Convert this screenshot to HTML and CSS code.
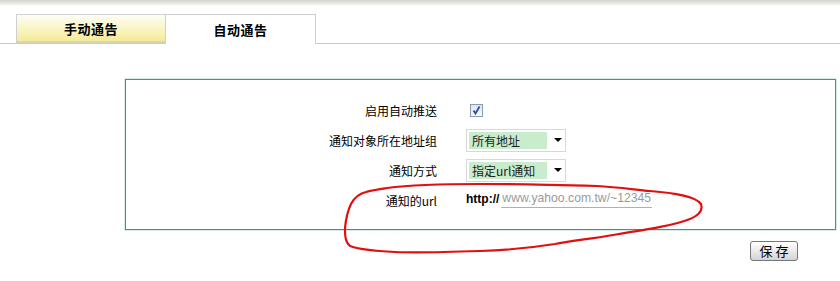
FILE: index.html
```html
<!DOCTYPE html>
<html lang="zh">
<head>
<meta charset="utf-8">
<title>自动通告</title>
<link rel="stylesheet" href="styles.css">
</head>
<body>
<div class="topbar"></div>
<div class="tabs">
  <div class="tab tab-manual">手动通告</div>
  <div class="tab tab-auto">自动通告</div>
</div>
<div class="panel">
  <div class="form">
    <div class="label">启用自动推送</div>
    <div class="value">
      <span class="checkbox">
        <svg width="13" height="13" viewBox="0 0 13 13"><path d="M3.5 6.5 L5.5 9.5 L9.5 2.5" fill="none" stroke="#2a4fa8" stroke-width="1.8"/></svg>
      </span>
    </div>
    <div class="label">通知对象所在地址组</div>
    <div class="value">
      <div class="select"><span class="sel-text">所有地址</span><span class="arrow"></span></div>
    </div>
    <div class="label">通知方式</div>
    <div class="value">
      <div class="select"><span class="sel-text">指定url通知</span><span class="arrow"></span></div>
    </div>
    <div class="label">通知的url</div>
    <div class="value url">
      <span class="proto">http://</span><span class="url-input">www.yahoo.com.tw/~12345<span class="caret"></span></span>
    </div>
  </div>
</div>
<div class="actions">
  <button class="save">保 存</button>
</div>
<svg class="scribble" width="840" height="281" viewBox="0 0 840 281">
  <path d="M387 188 C410 185 450 184 480 184 C520 184 560 185 597 186 C615 187 630 189 650 191 C675 193 695 196 701 204 C703 210 700 215 690 219 C675 225 650 229 613 235 C590 239 570 241 555 244 C530 248 510 250 480 251 C450 252 420 253 395 252 C375 251 360 250 350 246 C345 242 345 235 345 228 C346 218 348 210 351 204 C354 198 358 194 366 192 C372 190 380 189 387 188" fill="none" stroke="#e01010" stroke-width="2.2"/>
</svg>
</body>
</html>
```
FILE: styles.css
```css
html, body {
  margin: 0;
  padding: 0;
  background: #fff;
  font-family: "Noto Sans CJK SC", "Liberation Sans", sans-serif;
  color: #000;
}
body {
  position: relative;
  width: 840px;
  height: 281px;
  overflow: hidden;
}
.topbar {
  height: 6px;
  background: linear-gradient(#d4d4cc, #f4f4f0 80%, #fff);
}
.tabs {
  display: flex;
  margin-top: 8px;
  padding-left: 16px;
  border-bottom: 1px solid #c9c9c9;
  height: 29px;
}
.tab {
  width: 150px;
  box-sizing: border-box;
  border: 1px solid #cfcfcf;
  display: flex;
  align-items: center;
  justify-content: center;
  font-size: 13px;
  font-weight: bold;
  letter-spacing: 0.5px;
}
.tab-manual {
  background: linear-gradient(#fdfdf6, #f8f2b4 70%, #f3ea98);
  border-right: 1px solid #d6d2b0;
  border-bottom: 2px solid #d8d4b8;
}
.tab-auto {
  background: #fff;
  border-left: none;
  border-bottom: none;
  height: 30px;
}
.panel {
  margin: 35px 0 0 125px;
  width: 711px;
  height: 151px;
  box-sizing: border-box;
  border: 1px solid #2a9d97;
  box-shadow: 0 0 0 0.5px rgba(42, 157, 151, 0.4);
}
.form {
  display: grid;
  grid-template-columns: 311px auto;
  column-gap: 29px;
  grid-auto-rows: 30px;
  padding-top: 15px;
}
.label {
  text-align: right;
  font-size: 12px;
  display: flex;
  align-items: center;
  justify-content: flex-end;
}
.value {
  display: flex;
  align-items: center;
}
.checkbox {
  margin-left: 4px;
  width: 13px;
  height: 13px;
  box-sizing: border-box;
  border: 1px solid #8a9cb0;
  background: linear-gradient(#dfe3ea, #f8f9fb);
  display: flex;
}
.checkbox svg {
  margin: -1px;
}
.select {
  width: 100px;
  height: 23px;
  box-sizing: border-box;
  border: 1px solid #d8d8d8;
  display: flex;
  align-items: center;
  padding-left: 2px;
}
.sel-text {
  width: 78px;
  height: 17px;
  background: #c8eccc;
  font-size: 12px;
  line-height: 17px;
  padding-left: 3px;
  box-sizing: border-box;
  color: #222;
}
.arrow {
  margin-left: 7px;
  width: 0;
  height: 0;
  border-left: 4px solid transparent;
  border-right: 4px solid transparent;
  border-top: 4px solid #000;
}
.url {
  padding-bottom: 2px;
}
.proto {
  font-family: "Liberation Sans", sans-serif;
  font-weight: bold;
  font-size: 12px;
  margin-right: 2px;
}
.url-input {
  font-family: "Liberation Sans", sans-serif;
  font-size: 12.2px;
  color: #9a9a9a;
  border-bottom: 1px solid #b0b0b0;
  padding: 0 1px 1px 1px;
  width: 149px;
  display: flex;
  align-items: center;
  white-space: nowrap;
}
.caret {
  display: inline-block;
  width: 1px;
  height: 15px;
  background: #000;
  margin-left: 1px;
}
.actions {
  display: flex;
  justify-content: flex-end;
  padding-right: 42px;
  margin-top: 11px;
}
.save {
  width: 48px;
  height: 20px;
  padding: 0;
  border: 1px solid #777;
  border-radius: 3px;
  background: linear-gradient(#ffffff, #e6e6e6 60%, #d4d4d4);
  font-family: "Noto Sans CJK SC", sans-serif;
  font-size: 13px;
  line-height: 18px;
  color: #000;
}
.scribble {
  position: absolute;
  left: 0;
  top: 0;
  pointer-events: none;
}
```
